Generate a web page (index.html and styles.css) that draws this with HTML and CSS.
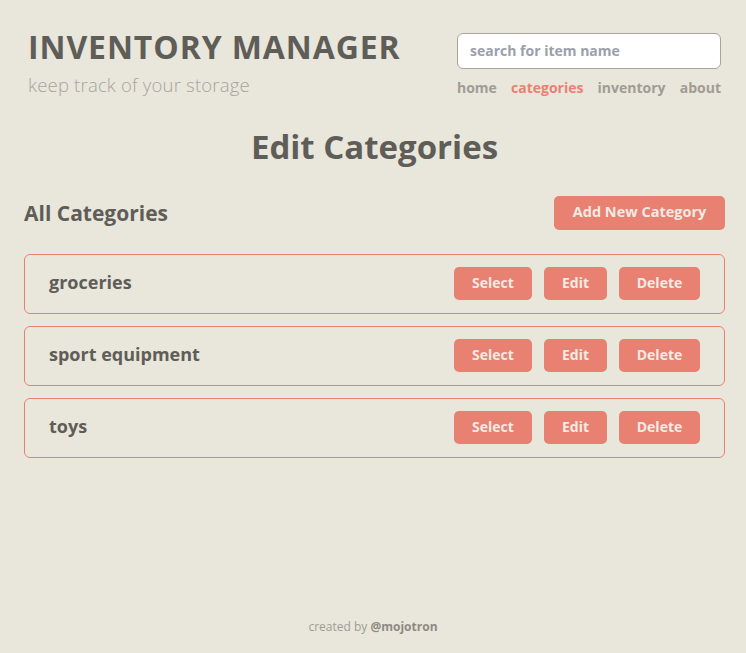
FILE: index.html
```html
<!DOCTYPE html>
<html>
<head>
<meta charset="utf-8">
<link rel="stylesheet" href="styles.css">
</head>
<body>
<div class="page">
  <header class="header">
    <div class="brand">
      <h1 class="title">INVENTORY MANAGER</h1>
      <p class="subtitle">keep track of your storage</p>
    </div>
    <div class="tools">
      <input class="search" type="text" placeholder="search for item name">
      <nav class="nav">
        <a class="nav-link">home</a>
        <a class="nav-link active">categories</a>
        <a class="nav-link">inventory</a>
        <a class="nav-link">about</a>
      </nav>
    </div>
  </header>
  <main class="main">
    <h2 class="page-title">Edit Categories</h2>
    <div class="section-head">
      <h3 class="section-title">All Categories</h3>
      <button class="btn btn-add">Add New Category</button>
    </div>
    <ul class="list">
      <li class="card">
        <span class="card-name">groceries</span>
        <div class="actions">
          <button class="btn btn-select">Select</button>
          <button class="btn btn-edit">Edit</button>
          <button class="btn btn-delete">Delete</button>
        </div>
      </li>
      <li class="card">
        <span class="card-name">sport equipment</span>
        <div class="actions">
          <button class="btn btn-select">Select</button>
          <button class="btn btn-edit">Edit</button>
          <button class="btn btn-delete">Delete</button>
        </div>
      </li>
      <li class="card">
        <span class="card-name">toys</span>
        <div class="actions">
          <button class="btn btn-select">Select</button>
          <button class="btn btn-edit">Edit</button>
          <button class="btn btn-delete">Delete</button>
        </div>
      </li>
    </ul>
  </main>
  <footer class="footer">created by <b>@mojotron</b></footer>
</div>
</body>
</html>
```

FILE: styles.css
```css
* { box-sizing: border-box; }
html, body { margin: 0; padding: 0; }
body {
  background: #e9e6db;
  font-family: "Open Sans", "Noto Sans", sans-serif;
  color: #5f5d58;
}
.page {
  min-height: 653px;
  display: flex;
  flex-direction: column;
}
.header {
  display: flex;
  justify-content: space-between;
  padding: 26px 25px 0 28px;
}
.title {
  margin: 0;
  font-family: "Open Sans", sans-serif;
  font-weight: 700;
  font-size: 32px;
  line-height: 42px;
  letter-spacing: 0.9px;
  color: #5f5d58;
}
.subtitle {
  margin: 5px 0 0;
  font-family: "Open Sans", sans-serif;
  font-weight: 300;
  font-size: 18.5px;
  line-height: 24px;
  letter-spacing: 0.2px;
  color: #a8a59d;
}
.tools {
  width: 264px;
  padding-top: 7px;
}
.search {
  display: block;
  width: 264px;
  height: 36px;
  border: 1px solid #a7a49e;
  border-radius: 6px;
  background: #fff;
  padding: 0 12px 2px;
  font-family: "Open Sans", sans-serif;
  font-weight: 700;
  font-size: 14px;
  outline: none;
}
.search::placeholder { color: #9aa0ab; }
.nav {
  display: flex;
  justify-content: space-between;
  margin-top: 9px;
}
.nav-link {
  font-weight: 700;
  font-size: 14px;
  line-height: 20px;
  color: #a09c94;
}
.nav-link.active { color: #e98173; }
.main {
  padding: 0 21px 0 24px;
  flex: 1;
}
.page-title {
  margin: 28px 0 0;
  text-align: center;
  font-weight: 700;
  font-size: 33px;
  line-height: 42px;
  color: #5f5d58;
}
.section-head {
  display: flex;
  justify-content: space-between;
  align-items: center;
  margin-top: 28px;
}
.section-title {
  margin: 0;
  font-size: 21px;
  font-weight: 700;
  color: #5f5d58;
}
.btn {
  border: none;
  background: #e98173;
  color: #f3ebe3;
  font-family: "Open Sans", sans-serif;
  font-weight: 700;
  font-size: 14px;
  border-radius: 5px;
  height: 33px;
  padding: 0 0 3px;
}
.btn-add { width: 171px; height: 34px; font-size: 14.5px; }
.list {
  list-style: none;
  margin: 24px 0 0;
  padding: 0;
  display: flex;
  flex-direction: column;
  gap: 12px;
}
.card {
  display: flex;
  justify-content: space-between;
  align-items: center;
  height: 60px;
  border: 1px solid #e98173;
  border-radius: 6px;
  padding: 0 24px 0 24px;
}
.card-name {
  font-weight: 700;
  font-size: 18px;
  color: #5f5d58;
  padding-bottom: 4px;
}
.actions {
  display: flex;
  gap: 12px;
  margin-bottom: 1px;
}
.btn-select { width: 78px; }
.btn-edit { width: 63px; }
.btn-delete { width: 81px; }
.footer {
  text-align: center;
  font-size: 12px;
  color: #a09c94;
  padding-bottom: 18px;
}
.footer b { font-weight: 700; color: #8e8a83; }
```
